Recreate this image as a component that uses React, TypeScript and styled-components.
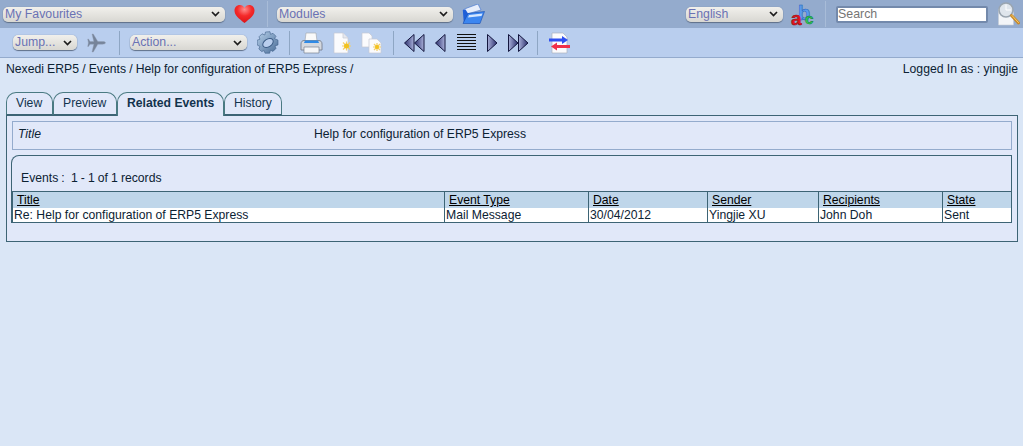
import React from 'react';
import styled, { createGlobalStyle } from 'styled-components';

const GlobalStyle = createGlobalStyle`
  html, body {
    margin: 0;
    padding: 0;
    height: 100%;
    background: #dae6f6;
    color: #0c2233;
    font-family: "Liberation Sans", Arial, sans-serif;
    font-size: 12.2px;
  }
`;

const Page = styled.div`
  width: 1023px;
  height: 446px;
  overflow: hidden;
  background: #dae6f6;
`;

const TopBar = styled.div`
  height: 28px;
  background: #94abcd;
  display: flex;
  align-items: center;
  padding: 0 3px 0 3px;
  box-sizing: border-box;
`;

const ActionBar = styled.div`
  height: 30px;
  background: #b9ceee;
  border-bottom: 1px solid #94abcd;
  display: flex;
  align-items: center;
  padding-left: 13px;
  box-sizing: border-box;
`;

const Select = styled.div<{ $w: number }>`
  width: ${({ $w }) => $w}px;
  height: 15px;
  box-sizing: border-box;
  display: flex;
  align-items: center;
  justify-content: space-between;
  padding: 0 5px 0 2px;
  border-radius: 5px;
  background: linear-gradient(#f1f0ec, #d8d7d2);
  box-shadow: 0 1px 1px #5f6f88, 0 0 1px #77839a;
  color: #6a72b4;
  font-size: 12.3px;
  line-height: 15px;
  svg { flex: none; }
`;

const Chevron = () => (
  <svg width="9" height="6" viewBox="0 0 9 6">
    <path d="M1 1l3.5 3.5L8 1" fill="none" stroke="#1c1c1c" strokeWidth="1.7" />
  </svg>
);

const Sep = styled.div<{ $l: number; $r: number; $tall?: boolean }>`
  width: 1px;
  height: ${({ $tall }) => ($tall ? 26 : 24)}px;
  margin: 0 ${({ $r }) => $r}px 0 ${({ $l }) => $l}px;
  background: ${({ $tall }) => ($tall ? '#a8bcd8' : '#8ea6c4')};
  flex: none;
`;

const IconSlot = styled.div<{ $w: number; $l: number }>`
  width: ${({ $w }) => $w}px;
  height: 24px;
  margin-left: ${({ $l }) => $l}px;
  flex: none;
  display: flex;
  align-items: center;
  justify-content: center;
`;

const Spring = styled.div`
  flex: 1;
`;

const SearchInput = styled.input`
  width: 152px;
  height: 17px;
  box-sizing: border-box;
  border: 2px solid #7389ab;
  border-radius: 2px;
  background: #fff;
  padding: 0 0 1px 0;
  margin: 0;
  font: 12.4px "Liberation Sans", Arial, sans-serif;
  outline: none;
  &::placeholder { color: #757575; opacity: 1; }
`;

const Heart = () => (
  <svg width="21" height="20" viewBox="0 0 21 20">
    <defs>
      <radialGradient id="h" cx="0.5" cy="0.25" r="0.8">
        <stop offset="0" stopColor="#ff8d8d" />
        <stop offset="0.45" stopColor="#f52a2a" />
        <stop offset="1" stopColor="#d80f14" />
      </radialGradient>
    </defs>
    <path d="M10.5 19C5 14.5.5 11.500.5 6.500.5 3.200 3 1 5.700 1c2.200 0 3.900 1.200 4.800 3 .9-1.800 2.600-3 4.800-3 2.700 0 5.200 2.200 5.200 5.500 0 5-4.500 8-10 12.500z" fill="url(#h)" />
  </svg>
);

const Folder = () => (
  <svg width="23" height="20" viewBox="0 0 23 20">
    <path d="M1 6l4-2 11-4 3 6-14 4z" fill="#e8eefb" stroke="#3a6fd0" strokeWidth="0.6" />
    <path d="M.8 6l1 13 15.200.5L21 8 6 9.500 3.500 5.500z" fill="#1f5fd8" />
    <path d="M6 9.500L22.500 7.500 18 19.500H1z" fill="#3c86f0" stroke="#1a4fb0" strokeWidth="0.6" />
    <path d="M7 11l13.500-1.500-1 2.500-13.500 1.500z" fill="#d5e6ff" />
  </svg>
);

const Abc = () => (
  <svg width="23" height="24" viewBox="0 0 23 24" overflow="visible">
    <text x="7" y="18" fontFamily="Liberation Sans" fontWeight="700" fontSize="20" fill="#5b9bf0" stroke="#1d5bb5" strokeWidth="0.5">b</text>
    <text x="0" y="23" fontFamily="Liberation Sans" fontWeight="700" fontSize="19" fill="#e8141c" stroke="#8e0c10" strokeWidth="0.5">a</text>
    <text x="14" y="22" fontFamily="Liberation Sans" fontWeight="700" fontSize="15" fill="#2fce57" stroke="#12793a" strokeWidth="0.5">c</text>
  </svg>
);

const Magnifier = () => (
  <svg width="23" height="24" viewBox="0 0 23 24">
    <path d="M1.500 7h12l3 3v13h-15z" fill="#f3f5f8" stroke="#c6ccd6" strokeWidth="0.6" />
    <circle cx="9" cy="8" r="7" fill="#dfe5ec" stroke="#9aa5b0" strokeWidth="1.600" />
    <path d="M9 2.500V8h5" fill="none" stroke="#fff" strokeWidth="1" />
    <path d="M14.500 13.500l7 7.500" stroke="#c98a2a" strokeWidth="3" strokeLinecap="round" />
    <path d="M15 13.500l6.500 7" stroke="#f6cf6c" strokeWidth="1" strokeLinecap="round" />
  </svg>
);

const Plane = () => (
  <svg width="19" height="20" viewBox="0 0 19 20">
    <path d="M18.500 9.800c0-.9-1.200-1.300-3-1.300h-4.700L6.300 1H5l1.800 7.500H3L1.500 6H.7l.7 3.800-.7 3.700h.8L3 11.200h3.800L5 19h1.300l4.500-7.800h4.700c1.800 0 3-.5 3-1.400z" fill="#76849a" stroke="#93a0b4" strokeWidth="0.4" />
  </svg>
);

const Gear = () => (
  <svg width="22" height="24" viewBox="0 0 22 24">
    <defs>
      <linearGradient id="g" x1="0" y1="0" x2="1" y2="1">
        <stop offset="0" stopColor="#b6d0ea" />
        <stop offset="1" stopColor="#4a6d98" />
      </linearGradient>
    </defs>
    <path
      d="M8.500 1l4.500-.3.500 2.600 2.500-1 3 3-1.500 2.300 3.500 1.500v4.800l-3 1 1 2.500-3 3-2.500-1.200-.8 3H8l-.8-2.600-2.500 1L1.800 18l1.200-2.500L.2 14V9.200L3 8.200 2 5.800 5 2.800l2.800 1.200z"
      fill="url(#g)"
      stroke="#3f5f88"
      strokeWidth="0.6"
    />
    <ellipse cx="11" cy="12" rx="5.800" ry="3.800" transform="rotate(-35 11 12)" fill="#b9ceee" stroke="#3a5a84" strokeWidth="1" />
  </svg>
);

const Printer = () => (
  <svg width="23" height="22" viewBox="0 0 23 22">
    <path d="M6 1h10l1 8H5z" fill="#fafafa" stroke="#a8acb3" strokeWidth="0.7" />
    <path d="M1 12c0-2.500 1.500-3.500 3-3.500h15c1.500 0 3 1 3 3.500v6H1z" fill="#d4d8df" stroke="#6e7786" strokeWidth="0.8" />
    <path d="M5 8.500h13l1 2.500H4z" fill="#2f8ae6" />
    <path d="M4 15h15v6H4z" fill="#f5f6f8" stroke="#7a828f" strokeWidth="0.7" />
  </svg>
);

const Sun = ({ x, y, r }: { x: number; y: number; r: number }) => (
  <g>
    <path
      d={`M${x - r - 2} ${y}h${2 * r + 4}M${x} ${y - r - 2}v${2 * r + 4}M${x - r - 1} ${y - r - 1}l${2 * r + 2} ${2 * r + 2}M${x + r + 1} ${y - r - 1}l${-2 * r - 2} ${2 * r + 2}`}
      stroke="#f4cf6a"
      strokeWidth="1.200"
    />
    <circle cx={x} cy={y} r={r} fill="#f2c21f" />
  </g>
);

const NewDoc = () => (
  <svg width="19" height="22" viewBox="0 0 19 22">
    <path d="M1 1h9l5 5v15H1z" fill="#fbfbfd" stroke="#c5c9d2" strokeWidth="0.7" />
    <path d="M10 1v5h5" fill="#e5e8ef" stroke="#c5c9d2" strokeWidth="0.7" />
    <Sun x={13.500} y={14} r={2.500} />
  </svg>
);

const CloneDoc = () => (
  <svg width="21" height="22" viewBox="0 0 21 22">
    <path d="M1 1h7l3 3v11H1z" fill="#fbfbfd" stroke="#c5c9d2" strokeWidth="0.7" />
    <path d="M8 7h8l4 4v10H8z" fill="#fbfbfd" stroke="#c5c9d2" strokeWidth="0.7" />
    <Sun x={16} y={15} r={2} />
  </svg>
);

const NavIcon = ({ kind }: { kind: 'first' | 'prev' | 'next' | 'last' }) => {
  const double = kind === 'first' || kind === 'last';
  const left = kind === 'first' || kind === 'prev';
  const w = double ? 21 : 11;
  const tri = (ox: number) =>
    left ? `M${ox + 0.5} 9L${ox + 10} .5v17z` : `M${ox + 0.5} .5L${ox + 10} 9 ${ox + 0.5} 17.500z`;
  const fill = left ? 'url(#navl)' : 'url(#navr)';
  return (
    <svg width={w} height="18" viewBox={`0 0 ${w} 18`}>
      <defs>
        <linearGradient id="navl" x1="0" y1="0" x2="1" y2="0">
          <stop offset="0" stopColor="#2b2f6e" />
          <stop offset="1" stopColor="#aab1da" />
        </linearGradient>
        <linearGradient id="navr" x1="0" y1="0" x2="1" y2="0">
          <stop offset="0" stopColor="#aab1da" />
          <stop offset="1" stopColor="#2b2f6e" />
        </linearGradient>
      </defs>
      <path d={tri(0)} fill={fill} stroke="#14173f" strokeWidth="1" />
      {double && <path d={tri(10)} fill={fill} stroke="#14173f" strokeWidth="1" />}
    </svg>
  );
};

const ListIcon = () => (
  <svg width="19" height="17" viewBox="0 0 19 17">
    {[0.5, 3.500, 6.500, 9.500, 12.500, 15.500].map((y) => (
      <path key={y} d={`M0 ${y}h19`} stroke="#101010" strokeWidth="1" />
    ))}
  </svg>
);

const ExportIcon = () => (
  <svg width="21" height="22" viewBox="0 0 21 22">
    <path d="M3 1h11l4 4v16H3z" fill="#fbfbfd" stroke="#aeb3bd" strokeWidth="0.7" />
    <path d="M0 6.500h13V4l6 4-6 4V9.500H0z" fill="#2f4ff0" />
    <path d="M21 13H8v-2.500l-6 4 6 4V16h13z" fill="#f0304a" />
  </svg>
);

const Crumbs = styled.div`
  height: 22px;
  display: flex;
  justify-content: space-between;
  padding: 4px 5px 0 6px;
  box-sizing: border-box;
  line-height: 14px;
`;

const Path = styled.span`
  word-spacing: -0.2px;
`;

const Tabs = styled.div`
  display: flex;
  margin: 12px 0 0 6px;
  height: 23px;
  align-items: flex-end;
  position: relative;
  z-index: 1;
`;

const Tab = styled.div<{ $w: number; $active?: boolean }>`
  width: ${({ $w }) => $w}px;
  height: ${({ $active }) => ($active ? 24 : 23)}px;
  margin-bottom: ${({ $active }) => ($active ? -1 : 0)}px;
  box-sizing: border-box;
  padding: 3px 0 0 9px;
  white-space: nowrap;
  border: 1px solid #4a7a82;
  border-bottom: ${({ $active }) => ($active ? 'none' : '1px solid #3d6475')};
  border-radius: 10px 10px 0 0;
  background: #e1e8f9;
  font-weight: ${({ $active }) => ($active ? 700 : 400)};
  color: #12334d;
  line-height: 15px;
`;

const Panel = styled.div`
  margin: 0 5px 0 6px;
  height: 127px;
  box-sizing: border-box;
  border: 1px solid #3d6475;
  background: #e1e8f9;
  padding: 5px 5px 0 5px;
`;

const TitleBox = styled.div`
  height: 29px;
  box-sizing: border-box;
  border: 1px solid #94abcd;
  display: flex;
  align-items: center;
  padding: 0 0 4px 5px;
`;

const TitleLabel = styled.span`
  width: 296px;
  font-style: italic;
`;

const ListBox = styled.div`
  margin: 5px 0 0 -1px;
  height: 68px;
  box-sizing: border-box;
  border: 1px solid #3d6475;
  border-radius: 8px 0 0 0;
  border-bottom: none;
  display: flex;
  flex-direction: column;
`;

const ListCaption = styled.div`
  height: 35px;
  box-sizing: border-box;
  padding: 15px 0 0 9px;
  line-height: 14px;
  word-spacing: -0.3px;
`;

const Table = styled.table`
  border-collapse: collapse;
  table-layout: fixed;
  width: 1000px;
`;

const Th = styled.th<{ $w: number }>`
  width: ${({ $w }) => $w}px;
  box-sizing: border-box;
  height: 16px;
  padding: 1px 0 0 4px;
  text-align: left;
  font-weight: 400;
  line-height: 14px;
  background: #bfd6ea;
  border: 1px solid #3d6475;
  border-bottom: none;
  color: #000;
  text-decoration: underline;
`;

const Td = styled.td`
  box-sizing: border-box;
  height: 15px;
  padding: 0 0 0 1px;
  line-height: 14px;
  background: #fff;
  border: 1px solid #3d6475;
  border-top: none;
  white-space: nowrap;
  overflow: hidden;
`;

const columns = [
  { label: 'Title', width: 432, value: 'Re: Help for configuration of ERP5 Express' },
  { label: 'Event Type', width: 144, value: 'Mail Message' },
  { label: 'Date', width: 119, value: '30/04/2012' },
  { label: 'Sender', width: 111, value: 'Yingjie XU' },
  { label: 'Recipients', width: 124, value: 'John Doh' },
  { label: 'State', width: 69, value: 'Sent' },
];

const App = () => (
  <Page>
    <GlobalStyle />
    <TopBar>
      <Select $w={222}>My Favourites<Chevron /></Select>
      <IconSlot $w={21} $l={9}><Heart /></IconSlot>
      <Sep $l={12} $r={9} $tall />
      <Select $w={176}>Modules<Chevron /></Select>
      <IconSlot $w={23} $l={9}><Folder /></IconSlot>
      <Spring />
      <Select $w={97}>English<Chevron /></Select>
      <IconSlot $w={23} $l={8}><Abc /></IconSlot>
      <Sep $l={11} $r={10} $tall />
      <SearchInput placeholder="Search" readOnly />
      <IconSlot $w={23} $l={9}><Magnifier /></IconSlot>
    </TopBar>
    <ActionBar>
      <Select $w={64}>Jump...<Chevron /></Select>
      <IconSlot $w={19} $l={10}><Plane /></IconSlot>
      <Sep $l={13} $r={10} />
      <Select $w={117}>Action...<Chevron /></Select>
      <IconSlot $w={22} $l={10}><Gear /></IconSlot>
      <Sep $l={10} $r={10} />
      <IconSlot $w={23} $l={0}><Printer /></IconSlot>
      <IconSlot $w={19} $l={10}><NewDoc /></IconSlot>
      <IconSlot $w={21} $l={9}><CloneDoc /></IconSlot>
      <Sep $l={11} $r={10} />
      <IconSlot $w={21} $l={0}><NavIcon kind="first" /></IconSlot>
      <IconSlot $w={11} $l={10}><NavIcon kind="prev" /></IconSlot>
      <IconSlot $w={19} $l={11}><ListIcon /></IconSlot>
      <IconSlot $w={11} $l={11}><NavIcon kind="next" /></IconSlot>
      <IconSlot $w={21} $l={10}><NavIcon kind="last" /></IconSlot>
      <Sep $l={8} $r={11} />
      <IconSlot $w={21} $l={0}><ExportIcon /></IconSlot>
    </ActionBar>
    <Crumbs>
      <Path>Nexedi ERP5 / Events / Help for configuration of ERP5 Express /</Path>
      <span>Logged In as : yingjie</span>
    </Crumbs>
    <Tabs>
      <Tab $w={47}>View</Tab>
      <Tab $w={64}>Preview</Tab>
      <Tab $w={107} $active>Related Events</Tab>
      <Tab $w={58}>History</Tab>
    </Tabs>
    <Panel>
      <TitleBox>
        <TitleLabel>Title</TitleLabel>
        <span>Help for configuration of ERP5 Express</span>
      </TitleBox>
      <ListBox>
        <ListCaption>Events :&nbsp; 1 - 1 of 1 records</ListCaption>
        <Table>
          <thead>
            <tr>
              {columns.map((c) => (
                <Th key={c.label} $w={c.width}>{c.label}</Th>
              ))}
            </tr>
          </thead>
          <tbody>
            <tr>
              {columns.map((c) => (
                <Td key={c.label}>{c.value}</Td>
              ))}
            </tr>
          </tbody>
        </Table>
      </ListBox>
    </Panel>
  </Page>
);

export default App;
